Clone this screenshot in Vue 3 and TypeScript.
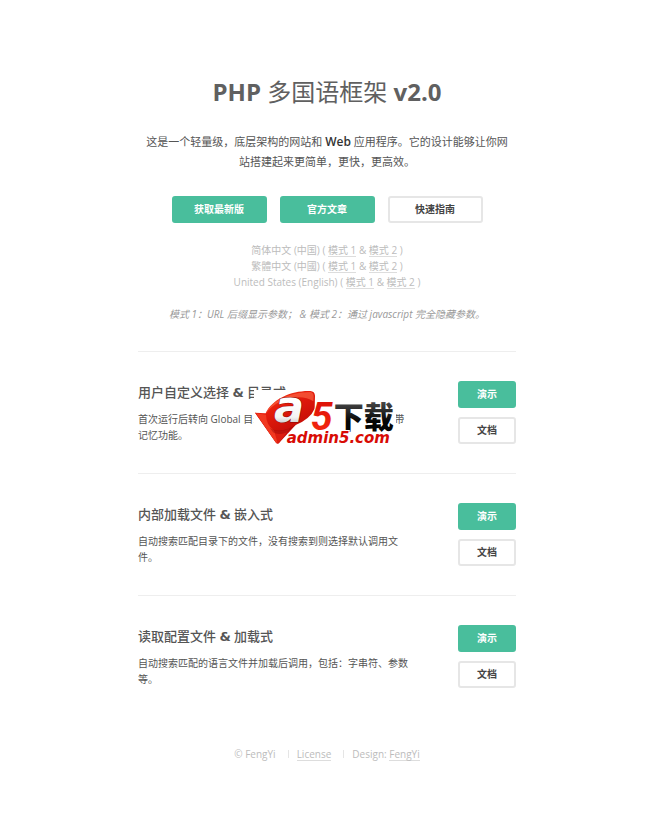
<script setup lang="ts">
interface Locale {
  name: string
}

interface Feature {
  title: string
  kind: string
  text: string
  tail: string
  branded: boolean
}

const locales: Locale[] = [
  { name: '简体中文 (中国)' },
  { name: '繁體中文 (中國)' },
  { name: 'United States (English)' },
]

const features: Feature[] = [
  {
    title: '用户自定义选择',
    kind: '目录式',
    text: '首次运行后转向 Global 目录',
    tail: '带记忆功能。',
    branded: true,
  },
  {
    title: '内部加载文件',
    kind: '嵌入式',
    text: '自动搜索匹配目录下的文件，没有搜索到则选择默认调用文件。',
    tail: '',
    branded: false,
  },
  {
    title: '读取配置文件',
    kind: '加载式',
    text: '自动搜索匹配的语言文件并加载后调用，包括：字串符、参数等。',
    tail: '',
    branded: false,
  },
]
</script>

<template>
  <main class="page">
    <header class="intro">
      <h1><b>PHP</b> 多国语框架 <b>v2.0</b></h1>
      <p class="lead">
        这是一个轻量级，底层架构的网站和 <strong>Web</strong> 应用程序。它的设计能够让你网<br />站搭建起来更简单，更快，更高效。
      </p>
      <nav class="actions">
        <a class="btn primary" href="#download">获取最新版</a>
        <a class="btn primary" href="#article">官方文章</a>
        <a class="btn" href="#guide">快速指南</a>
      </nav>
      <ul class="locales">
        <li v-for="locale in locales" :key="locale.name">
          {{ locale.name }} ( <a href="#mode-1">模式 1</a> &amp; <a href="#mode-2">模式 2</a> )
        </li>
      </ul>
      <p class="note">模式 1：URL 后缀显示参数； &amp; 模式 2：通过 javascript 完全隐藏参数。</p>
    </header>

    <section v-for="feature in features" :key="feature.title" class="feature">
      <div class="copy">
        <h2>{{ feature.title }} <b>&amp;</b> {{ feature.kind }}</h2>
        <p>{{ feature.text }}<template v-if="feature.tail"><span class="gap"></span>{{ feature.tail }}</template></p>
      </div>
      <div class="side">
        <a class="btn primary" href="#demo">演示</a>
        <a class="btn" href="#docs">文档</a>
      </div>
      <svg v-if="feature.branded" class="brand" viewBox="12 30 426 180" role="img" aria-label="a5下载 admin5.com">
        <defs>
          <linearGradient id="red" x1="0" y1="0" x2="0.6" y2="1">
            <stop offset="0" stop-color="#ff5a2a" />
            <stop offset="0.4" stop-color="#e51c0c" />
            <stop offset="1" stop-color="#b80806" />
          </linearGradient>
          <linearGradient id="five" x1="0" y1="0" x2="0" y2="1">
            <stop offset="0" stop-color="#d80d05" />
            <stop offset="1" stop-color="#fa2c10" />
          </linearGradient>
          <linearGradient id="silver" x1="0" y1="0" x2="0" y2="1">
            <stop offset="0.4" stop-color="#ffffff" />
            <stop offset="0.7" stop-color="#f4f4f4" />
            <stop offset="0.9" stop-color="#b5b5b5" />
          </linearGradient>
          <linearGradient id="coal" x1="0" y1="0" x2="0" y2="1">
            <stop offset="0.2" stop-color="#4a4a4a" />
            <stop offset="0.65" stop-color="#050505" />
          </linearGradient>
        </defs>
        <path d="M15 98L47 100C67 56 126 31 181 33Q194 34 195 47L194 86Q181 116 137 135L87 189Q81 193 77 187Z" fill="url(#red)" />
        <path d="M15 98L48 104Q47 126 60 145Q83 163 120 144L87 189Q81 193 77 187Z" fill="#dc1d0f" />
        <path d="M18 100L48 104Q49 135 72 151L82 187Q80 190 77 187Z" fill="#ff4b2b" opacity="0.6" />
        <path d="M48 100C65 61 120 38 181 36Q191 38 191 50L190 64C150 36 75 60 48 100Z" fill="#ff7550" opacity="0.55" />
        <path d="M60 144Q91 164 140 133L108 158Q84 166 69 157Z" fill="#8f0604" opacity="0.4" />
        <text x="72" y="125" class="letter">a</text>
        <text x="182" y="149" class="digit">5</text>
        <text x="251" y="143" class="word">下载</text>
        <text x="110" y="190" class="domain">admin5.com</text>
      </svg>
    </section>

    <footer class="footer">
      <span>© FengYi</span>
      <span><a href="#license">License</a></span>
      <span>Design: <a href="#design">FengYi</a></span>
    </footer>
  </main>
</template>

<style>
body {
  background: #ffffff;
}
</style>

<style scoped>
.page {
  box-sizing: border-box;
  max-width: 382px;
  margin: 0 auto;
  padding: 74px 0 72px 4px;
  color: #555555;
  font: 10px/16px "Open Sans", "Noto Sans CJK SC", sans-serif;
}
h1,
h2,
p,
ul {
  margin: 0;
  padding: 0;
}
.intro {
  text-align: center;
}
h1 {
  color: #606060;
  font-size: 24px;
  font-weight: 400;
  line-height: 36px;
}
.lead {
  margin-top: 22px;
  font-size: 11px;
  line-height: 20px;
}
.lead strong {
  color: #333333;
  font-size: 12px;
  font-weight: 600;
}
.actions {
  display: flex;
  justify-content: center;
  gap: 13px;
  margin-top: 24px;
}
.btn {
  box-sizing: border-box;
  height: 27px;
  border: 2px solid #e6e6e6;
  border-radius: 3px;
  background: #ffffff;
  color: #444444;
  font-weight: 700;
  line-height: 23px;
  text-align: center;
  text-decoration: none;
}
.btn.primary {
  border-color: #49be9c;
  background: #49be9c;
  color: #ffffff;
}
.actions .btn {
  width: 95px;
}
.locales {
  margin-top: 19px;
  color: #bcbcbc;
  list-style: none;
}
.locales a,
.footer a {
  display: inline-block;
  border-bottom: 1px solid #dddddd;
  color: inherit;
  line-height: 12px;
  text-decoration: none;
}
.note {
  margin: 16px 0 29px;
  color: #999999;
  font-style: italic;
}
.feature {
  position: relative;
  display: flex;
  justify-content: space-between;
  padding: 29px 0;
  border-top: 1px solid #eeeeee;
}
.copy {
  width: 272px;
}
.gap {
  display: inline-block;
  width: 131px;
}
h2 {
  margin: 1px 0 9px;
  font-size: 13px;
  font-weight: 500;
  line-height: 20px;
}
h2 b {
  font-family: "DejaVu Sans", sans-serif;
  line-height: 1;
}
.side {
  display: flex;
  flex-direction: column;
  gap: 9px;
  width: 58px;
}
.brand {
  position: absolute;
  top: 38px;
  left: 116px;
  width: 142px;
  height: 60px;
  background: #ffffff;
}
.letter {
  fill: url(#silver);
  stroke: #8a0906;
  stroke-width: 3px;
  paint-order: stroke;
  font: italic 700 134px "DejaVu Sans", sans-serif;
}
.digit {
  fill: url(#five);
  stroke: #ffffff;
  stroke-width: 4px;
  paint-order: stroke;
  font: italic 700 118px "Roboto", sans-serif;
}
.word {
  fill: url(#coal);
  font: 900 90px "Noto Sans CJK SC", sans-serif;
}
.domain {
  fill: #d80b05;
  stroke: #ffffff;
  stroke-width: 6px;
  paint-order: stroke;
  font: italic 700 45px "DejaVu Sans", sans-serif;
}
.footer {
  display: flex;
  justify-content: center;
  margin-top: 29px;
  color: #bcbcbc;
}
.footer span + span {
  margin-left: 12px;
  padding-left: 9px;
  background: linear-gradient(#e5e5e5, #e5e5e5) no-repeat 0 4px / 1px 8px;
}
</style>
